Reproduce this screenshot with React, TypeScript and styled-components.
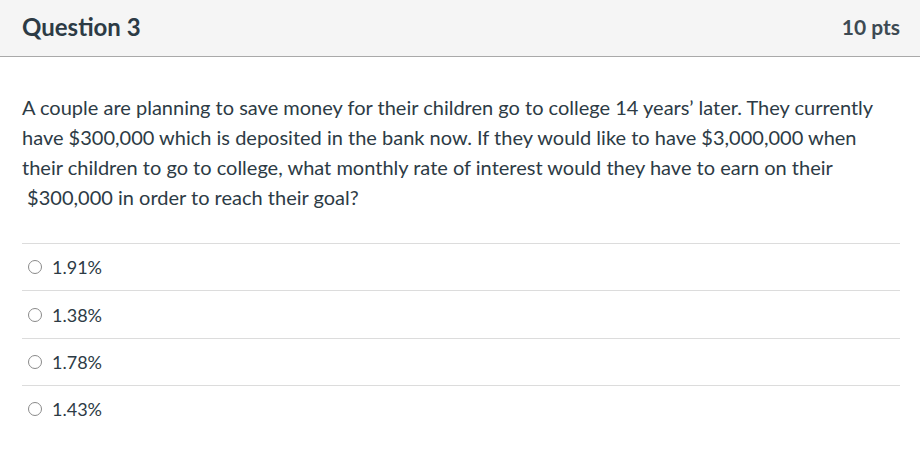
import React from "react";
import styled, { createGlobalStyle } from "styled-components";

const Global = createGlobalStyle`
  html, body { margin: 0; padding: 0; background: #fff; }
  body { font-family: Lato, "Open Sans", sans-serif; color: #2d3b45; }
`;

const Card = styled.div`
  width: 920px;
  display: flex;
  flex-direction: column;
`;

const Header = styled.div`
  height: 57px;
  box-sizing: border-box;
  background: #f5f5f5;
  border-bottom: 1px solid #a9a9a9;
  display: flex;
  align-items: center;
  justify-content: space-between;
  padding: 0 20px 3px 22px;
`;

const Title = styled.h2`
  margin: 0;
  font-size: 24px;
  font-weight: 700;
  color: #2d3b45;
`;

const Points = styled.span`
  font-size: 21px;
  font-weight: 700;
  color: #3d4a53;
`;

const Body = styled.div`
  padding: 35px 20px 0 22px;
`;

const Question = styled.p`
  margin: 0 0 31px;
  font-size: 20px;
  line-height: 30px;
  color: #2d3b45;
`;

const Answers = styled.div`
  display: flex;
  flex-direction: column;
`;

const Answer = styled.label`
  height: 47.4px;
  box-sizing: border-box;
  border-top: 1px solid #dcdcdc;
  display: flex;
  align-items: center;
  padding-left: 6px;
  gap: 10px;
  font-size: 18px;
  color: #2d3b45;
`;

const Radio = styled.span`
  width: 14px;
  height: 14px;
  box-sizing: border-box;
  border: 1.4px solid #8a8a8a;
  border-radius: 50%;
  flex-shrink: 0;
  margin-left: 0;
`;

const options = ["1.91%", "1.38%", "1.78%", "1.43%"];

export default function App() {
  return (
    <>
      <Global />
      <Card>
        <Header>
          <Title>Question 3</Title>
          <Points>10 pts</Points>
        </Header>
        <Body>
          <Question>
            A couple are planning to save money for their children go to college 14 years’ later. They currently
            <br />
            have $300,000 which is deposited in the bank now. If they would like to have $3,000,000 when
            <br />
            their children to go to college, what monthly rate of interest would they have to earn on their
            <br />
            &nbsp;$300,000 in order to reach their goal?
          </Question>
          <Answers>
            {options.map((o) => (
              <Answer key={o}>
                <Radio />
                {o}
              </Answer>
            ))}
          </Answers>
        </Body>
      </Card>
    </>
  );
}
